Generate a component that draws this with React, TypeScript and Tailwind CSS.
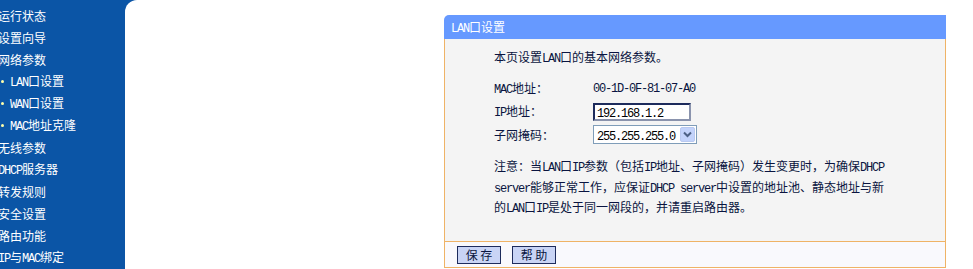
import React from "react";

// Router admin page — LAN settings, old TP-Link style.
const MENU: { label: string; sub?: boolean }[] = [
  { label: "运行状态" },
  { label: "设置向导" },
  { label: "网络参数" },
  { label: "LAN口设置", sub: true },
  { label: "WAN口设置", sub: true },
  { label: "MAC地址克隆", sub: true },
  { label: "无线参数" },
  { label: "DHCP服务器" },
  { label: "转发规则" },
  { label: "安全设置" },
  { label: "路由功能" },
  { label: "IP与MAC绑定" },
];

// Latin runs get the narrow half-width mono look of the bitmap font.
function T({ s }: { s: string }) {
  const parts = s.split(/([\x20-\x7e]+)/);
  return (
    <>
      {parts.map((p, i) =>
        /^[\x20-\x7e]+$/.test(p) ? (
          <span key={i} className="font-['Liberation_Mono',monospace] tracking-[-1.2px]">
            {p}
          </span>
        ) : (
          <React.Fragment key={i}>{p}</React.Fragment>
        )
      )}
    </>
  );
}

export default function App() {
  return (
    <div className="flex h-[269px] w-[973px] overflow-hidden bg-white font-['Noto_Sans_CJK_SC',sans-serif] text-[12px]">
      <Sidebar />
      <div className="flex-1 bg-[#0b55a6]">
        <div className="flex h-full rounded-tl-[12px] bg-white pl-[319px] pt-[15px]">
          <LanPanel />
        </div>
      </div>
    </div>
  );
}

function Sidebar() {
  return (
    <div className="w-[125px] shrink-0 bg-[#0b55a6] pt-[4.5px]">
      {MENU.map((m) => (
        <div
          key={m.label}
          className="-ml-[2px] flex h-[22px] items-center whitespace-nowrap leading-[22px] text-white"
        >
          {m.sub && (
            <span className="ml-[3px] mr-[6px] inline-block h-[3px] w-[3px] rounded-full bg-[#ffffaa]" />
          )}
          <span>
            <T s={m.label} />
          </span>
        </div>
      ))}
    </div>
  );
}

function LanPanel() {
  return (
    <div className="flex w-[502px] flex-col text-[#0a1440]">
      <div className="h-[24px] rounded-tl-[5px] bg-[#6699ff] pl-[7px] leading-[24px] text-white">
        <T s="LAN口设置" />
      </div>

      <div className="h-[202px] border-x border-[#efb366] bg-[#f4f4f4] pl-[49px] pt-[9px]">
        <div className="h-[18px] leading-[18px]">
          <T s="本页设置LAN口的基本网络参数。" />
        </div>

        <div className="mt-[11px]">
          <Row label="MAC地址：">
            <T s="00-1D-0F-81-07-A0" />
          </Row>
          <Row label="IP地址：">
            <div className="h-[18px] w-[98px] border-2 border-[#1d2b5c] border-b-[#8a93ad] border-r-[#8a93ad] bg-white pl-[2px] leading-[14px] text-black">
              <T s="192.168.1.2" />
            </div>
          </Row>
          <Row label="子网掩码：">
            <div className="flex h-[19px] w-[104px] items-stretch border border-[#7f9db9] bg-white">
              <div className="flex-1 pl-[3px] leading-[17px] text-black">
                <T s="255.255.255.0" />
              </div>
              <div className="m-px flex w-[15px] items-center justify-center rounded-[2px] border border-[#b9c9f0] bg-[#c3d3fb]">
                <svg width="9" height="7" viewBox="0 0 9 7">
                  <path d="M1 1.5 L4.5 5 L8 1.5" fill="none" stroke="#4d6185" strokeWidth="2" />
                </svg>
              </div>
            </div>
          </Row>
        </div>

        <div className="mt-[11px] whitespace-nowrap leading-[18.5px]">
          <div>
            <T s="注意：当LAN口IP参数（包括IP地址、子网掩码）发生变更时，为确保DHCP" />
          </div>
          <div>
            <T s="server能够正常工作，应保证DHCP server中设置的地址池、静态地址与新" />
          </div>
          <div>
            <T s="的LAN口IP是处于同一网段的，并请重启路由器。" />
          </div>
        </div>
      </div>

      <div className="flex h-[27px] items-center gap-[11px] border border-[#efb366] bg-[#f9f9fd] pl-[12px]">
        <Btn label="保 存" />
        <Btn label="帮 助" />
      </div>
    </div>
  );
}

function Row({ label, children }: { label: string; children: React.ReactNode }) {
  return (
    <div className="flex h-[23px] items-center">
      <div className="w-[99px] shrink-0">
        <T s={label} />
      </div>
      {children}
    </div>
  );
}

function Btn({ label }: { label: string }) {
  return (
    <div className="h-[18px] w-[44px] border border-[#1d2b5c] bg-[#c9d4f5] text-center leading-[16px] text-[#0a1440]">
      {label}
    </div>
  );
}
